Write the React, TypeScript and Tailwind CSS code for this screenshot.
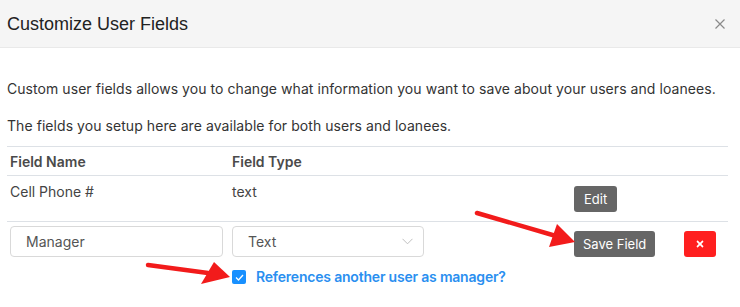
import React from "react";
import { FaTimes } from "react-icons/fa";

export default function App() {
  return (
    <div
      className="relative w-[740px] h-[307px] overflow-hidden bg-white text-[#333]"
      style={{ fontFamily: 'Inter, "Liberation Sans", Arial, sans-serif' }}
    >
      <div className="h-[48px] bg-[#f5f5f5] border-b border-[#e9e9e9] flex items-center justify-between pl-[7px] pr-[15px]">
        <div
          className="text-[18px] text-[#222] leading-none"
          style={{ fontFamily: '"Liberation Sans", Arial, sans-serif' }}
        >
          Customize User Fields
        </div>
        <svg width="10" height="10" viewBox="0 0 10 10" className="mt-[1px]">
          <path d="M0.5 0.5 L9.5 9.5 M9.5 0.5 L0.5 9.5" stroke="#8a8a8a" strokeWidth="1.2" />
        </svg>
      </div>

      <div className="px-[7px] pt-[30px]">
        <p className="text-[14px] leading-[22px] text-[#333] tracking-[0.06px]">
          Custom user fields allows you to change what information you want to save about your users and loanees.
        </p>
        <p className="text-[14px] leading-[22px] text-[#333] tracking-[0.06px] mt-[15px]">
          The fields you setup here are available for both users and loanees.
        </p>

        <div className="mt-[9px] w-[721px] border-t border-[#dde1e6]">
          <div className="flex h-[29px] items-center border-b border-[#dde1e6] text-[14px] font-semibold text-[#4a4a4a]">
            <div className="w-[222px] pl-[3px]">Field Name</div>
            <div className="w-[342px] pl-[3px]">Field Type</div>
            <div className="w-[110px]"></div>
            <div className="flex-1"></div>
          </div>

          <div className="flex items-start pt-[6px] pb-[9px] border-b border-[#dde1e6] text-[14px] text-[#444]">
            <div className="w-[222px] pl-[3px] leading-[20px]">Cell Phone #</div>
            <div className="w-[342px] pl-[3px] leading-[20px]">text</div>
            <div className="w-[110px] pl-[3px] mt-[4px]">
              <button className="h-[26px] px-[10px] bg-[#666] text-white text-[13px] rounded-[3px] leading-none">
                Edit
              </button>
            </div>
            <div className="flex-1"></div>
          </div>

          <div className="flex items-start pt-[4px] text-[14px]">
            <div className="w-[222px] pl-[3px]">
              <div className="w-[213px] h-[31px] border border-[#d9d9d9] rounded-[4px] flex items-center pl-[15px] text-[#555]">
                Manager
              </div>
            </div>
            <div className="w-[342px] pl-[3px]">
              <div className="w-[192px] h-[31px] border border-[#d9d9d9] rounded-[4px] flex items-center justify-between pl-[15px] pr-[10px] text-[#555]">
                <span>Text</span>
                <svg width="11" height="7" viewBox="0 0 11 7">
                  <path d="M0.5 0.8 L5.5 5.8 L10.5 0.8" fill="none" stroke="#bfbfbf" strokeWidth="1" />
                </svg>
              </div>
              <div className="mt-[10px] flex items-center gap-[10px]">
                <div className="w-[14px] h-[14px] rounded-[2px] bg-[#1890ff] flex items-center justify-center">
                  <svg width="9" height="7" viewBox="0 0 9 7">
                    <path d="M1 3.5 L3.5 6 L8 1" fill="none" stroke="white" strokeWidth="1.3" />
                  </svg>
                </div>
                <span className="font-semibold text-[14px] text-[#2a8ff0] leading-[20px] tracking-[-0.2px]">
                  References another user as manager?
                </span>
              </div>
            </div>
            <div className="w-[110px] pl-[3px] mt-[5px]">
              <button className="h-[26px] px-[9px] bg-[#666] text-white text-[13px] rounded-[3px] leading-none whitespace-nowrap">
                Save Field
              </button>
            </div>
            <div className="flex-1 pl-[3px] mt-[5px]">
              <button className="h-[26px] w-[32px] bg-[#ff1f1f] text-white rounded-[3px] flex items-center justify-center">
                <FaTimes size={10} />
              </button>
            </div>
          </div>
        </div>
      </div>

      <svg
        className="absolute inset-0 pointer-events-none"
        width="740"
        height="307"
        viewBox="0 0 740 307"
      >
        <line x1="477" y1="213" x2="556" y2="236" stroke="#f21b1b" strokeWidth="4.5" strokeLinecap="round" />
        <polygon points="557,224 549,247 575,242" fill="#f21b1b" />
        <line x1="148" y1="265" x2="208" y2="273" stroke="#f21b1b" strokeWidth="4.5" strokeLinecap="round" />
        <polygon points="214,262 201,284 230,277" fill="#f21b1b" />
      </svg>
    </div>
  );
}
